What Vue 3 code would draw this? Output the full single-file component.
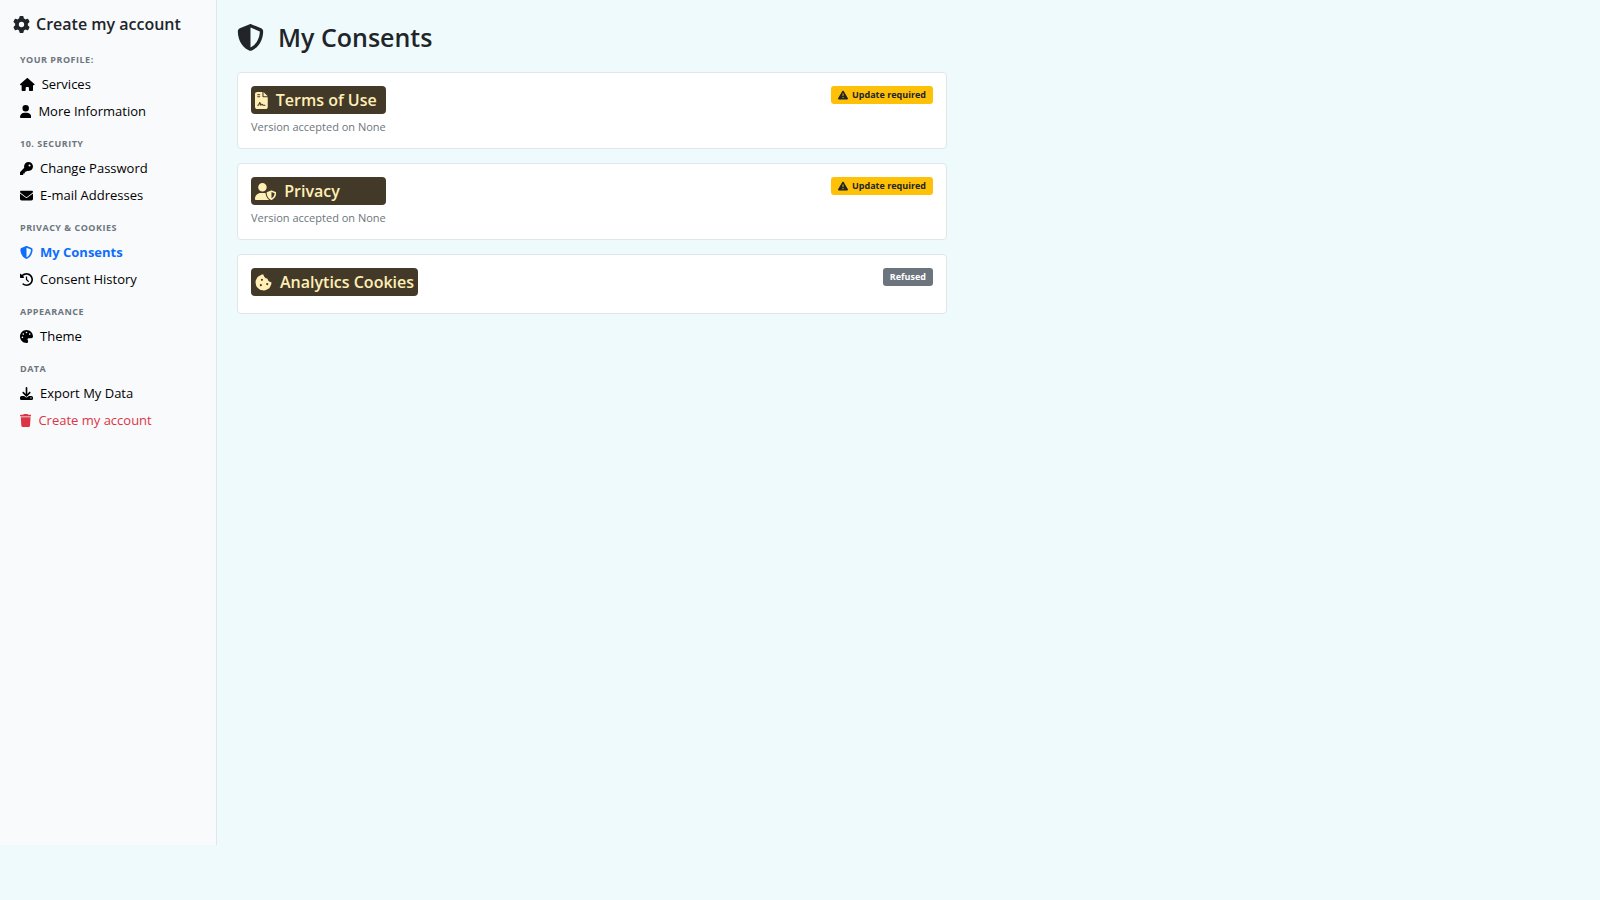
<script setup>
import { ref } from "vue";

const icons = {
  gear: { w: 512, d: "M495.9 166.6c3.2 8.7 .5 18.4-6.4 24.6l-43.3 39.4c1.1 8.3 1.7 16.8 1.7 25.4s-.6 17.1-1.7 25.4l43.3 39.4c6.9 6.2 9.6 15.9 6.4 24.6c-4.4 11.9-9.7 23.3-15.8 34.3l-4.7 8.1c-6.6 11-14 21.4-22.1 31.2c-5.9 7.2-15.7 9.6-24.5 6.8l-55.7-17.7c-13.4 10.3-28.2 18.9-44 25.4l-12.5 57.1c-2 9.1-9 16.3-18.2 17.8c-13.8 2.3-28 3.5-42.5 3.5s-28.7-1.2-42.5-3.5c-9.2-1.5-16.2-8.7-18.2-17.8l-12.5-57.1c-15.8-6.5-30.6-15.1-44-25.4L83.1 425.9c-8.8 2.8-18.6 .3-24.5-6.8c-8.1-9.8-15.5-20.2-22.1-31.2l-4.7-8.1c-6.1-11-11.4-22.4-15.8-34.3c-3.2-8.7-.5-18.4 6.4-24.6l43.3-39.4C64.6 273.1 64 264.6 64 256s.6-17.1 1.7-25.4L22.4 191.2c-6.9-6.2-9.6-15.9-6.4-24.6c4.4-11.9 9.7-23.3 15.8-34.3l4.7-8.1c6.6-11 14-21.4 22.1-31.2c5.9-7.2 15.7-9.6 24.5-6.8l55.7 17.7c13.4-10.3 28.2-18.9 44-25.4l12.5-57.1c2-9.1 9-16.3 18.2-17.8C227.3 1.2 241.5 0 256 0s28.7 1.2 42.5 3.5c9.2 1.5 16.2 8.7 18.2 17.8l12.5 57.1c15.8 6.5 30.6 15.1 44 25.4l55.7-17.7c8.8-2.8 18.6-.3 24.5 6.8c8.1 9.8 15.5 20.2 22.1 31.2l4.7 8.1c6.1 11 11.4 22.4 15.8 34.3zM256 336a80 80 0 1 0 0-160 80 80 0 1 0 0 160z" },
  house: { w: 576, d: "M575.8 255.5c0 18-15 32.1-32 32.1h-32l.7 160.2c0 2.7-.2 5.4-.5 8.1V472c0 22.1-17.9 40-40 40H456c-1.1 0-2.2 0-3.3-.1c-1.4 .1-2.8 .1-4.2 .1H416 392c-22.1 0-40-17.9-40-40V448 384c0-17.7-14.3-32-32-32H256c-17.7 0-32 14.3-32 32v64 24c0 22.1-17.9 40-40 40H160 128.1c-1.5 0-3-.1-4.5-.2c-1.2 .1-2.4 .2-3.6 .2H104c-22.1 0-40-17.9-40-40V360c0-.9 0-1.9 .1-2.8V287.6H32c-18 0-32-14-32-32.1c0-9 3-17 10-24L266.4 8c7-7 15-8 22-8s15 2 21 7L564.8 231.5c8 7 12 15 11 24z" },
  user: { w: 448, d: "M224 256A128 128 0 1 0 224 0a128 128 0 1 0 0 256zm-45.7 48C79.8 304 0 383.8 0 482.3C0 498.7 13.3 512 29.7 512H418.3c16.4 0 29.7-13.3 29.7-29.7C448 383.8 368.2 304 269.7 304H178.3z" },
  key: { w: 512, d: "M336 352c97.2 0 176-78.8 176-176S433.2 0 336 0S160 78.8 160 176c0 18.7 2.9 36.8 8.3 53.7L7 391c-4.5 4.5-7 10.6-7 17v80c0 13.3 10.7 24 24 24h80c13.3 0 24-10.7 24-24V448h40c13.3 0 24-10.7 24-24V384h40c6.4 0 12.5-2.5 17-7l33.3-33.3c16.9 5.4 35 8.3 53.7 8.3zM376 96a40 40 0 1 1 0 80 40 40 0 1 1 0-80z" },
  envelope: { w: 512, d: "M48 64C21.5 64 0 85.5 0 112c0 15.1 7.1 29.3 19.2 38.4L236.8 313.6c11.4 8.5 27 8.5 38.4 0L492.8 150.4c12.1-9.1 19.2-23.3 19.2-38.4c0-26.5-21.5-48-48-48H48zM0 176V384c0 35.3 28.7 64 64 64H448c35.3 0 64-28.7 64-64V176L294.4 339.2c-22.8 17.1-54 17.1-76.8 0L0 176z" },
  shield: { w: 512, d: "M256 0c4.6 0 9.2 1 13.4 2.9L457.7 82.8c22 9.3 38.4 31 38.3 57.2c-.5 99.2-41.3 280.7-213.6 363.2c-16.7 8-36.1 8-52.8 0C57.3 420.7 16.5 239.2 16 140c-.1-26.2 16.3-47.9 38.3-57.2L242.7 2.9C246.8 1 251.4 0 256 0zm0 66.8V444.8C394 378 431.1 230.1 432 141.4L256 66.8l0 0z" },
  history: { w: 512, d: "M75 75L41 41C25.9 25.9 0 36.6 0 57.9V168c0 13.3 10.7 24 24 24H134.1c21.4 0 32.1-25.9 17-41l-30.8-30.8C155 85.5 203 64 256 64c106 0 192 86 192 192s-86 192-192 192c-40.8 0-78.6-12.7-109.7-34.4c-14.5-10.1-34.4-6.6-44.6 7.9s-6.6 34.4 7.9 44.6C151.2 495 201.7 512 256 512c141.4 0 256-114.6 256-256S397.4 0 256 0C185.3 0 121.3 28.7 75 75zm181 53c-13.3 0-24 10.7-24 24V256c0 6.4 2.5 12.5 7 17l72 72c9.4 9.4 24.6 9.4 33.9 0s9.4-24.6 0-33.9l-65-65V152c0-13.3-10.7-24-24-24z" },
  palette: { w: 512, d: "M512 256c0 .9 0 1.8 0 2.7c-.4 36.5-33.6 61.3-70.1 61.3H344c-26.5 0-48 21.5-48 48c0 3.4 .4 6.7 1 9.9c2.1 10.2 6.5 20 10.8 29.9c6.1 13.8 12.1 27.5 12.1 42c0 31.8-21.6 60.7-53.4 62c-3.5 .1-7 .2-10.6 .2C114.6 512 0 397.4 0 256S114.6 0 256 0S512 114.6 512 256zM128 288a32 32 0 1 0 -64 0 32 32 0 1 0 64 0zm0-96a32 32 0 1 0 0-64 32 32 0 1 0 0 64zM288 96a32 32 0 1 0 -64 0 32 32 0 1 0 64 0zm96 96a32 32 0 1 0 0-64 32 32 0 1 0 0 64z" },
  download: { w: 512, d: "M288 32c0-17.7-14.3-32-32-32s-32 14.3-32 32V274.7l-73.4-73.4c-12.5-12.5-32.8-12.5-45.3 0s-12.5 32.8 0 45.3l128 128c12.5 12.5 32.8 12.5 45.3 0l128-128c12.5-12.5 12.5-32.8 0-45.3s-32.8-12.5-45.3 0L288 274.7V32zM64 352c-35.3 0-64 28.7-64 64v32c0 35.3 28.7 64 64 64H448c35.3 0 64-28.7 64-64V416c0-35.3-28.7-64-64-64H346.5l-45.3 45.3c-25 25-65.5 25-90.5 0L165.5 352H64zm368 56a24 24 0 1 1 0 48 24 24 0 1 1 0-48z" },
  trash: { w: 448, d: "M135.2 17.7L128 32H32C14.3 32 0 46.3 0 64S14.3 96 32 96H416c17.7 0 32-14.3 32-32s-14.3-32-32-32H320l-7.2-14.3C307.4 6.8 296.3 0 284.2 0H163.8c-12.1 0-23.2 6.8-28.6 17.7zM416 128H32L53.2 467c1.6 25.3 22.6 45 47.9 45H346.9c25.3 0 46.3-19.7 47.9-45L416 128z" },
  contract: { w: 384, d: "M64 0C28.7 0 0 28.7 0 64V448c0 35.3 28.7 64 64 64H320c35.3 0 64-28.7 64-64V160H256c-17.7 0-32-14.3-32-32V0H64zM256 0V128H384L256 0zM80 64h64c8.8 0 16 7.2 16 16s-7.2 16-16 16H80c-8.8 0-16-7.2-16-16s7.2-16 16-16zm0 64h64c8.8 0 16 7.2 16 16s-7.2 16-16 16H80c-8.8 0-16-7.2-16-16s7.2-16 16-16zm54.2 253.8c-6.1 20.3-24.8 34.2-46 34.2H80c-8.8 0-16-7.2-16-16s7.2-16 16-16h8.2c7.1 0 13.3-4.6 15.3-11.4l14.9-49.5c3.4-11.3 13.8-19.1 25.6-19.1s22.2 7.7 25.6 19.1l11.6 38.6c7.4-6.2 16.8-9.7 26.8-9.7c15.9 0 30.4 9 37.5 23.2l4.4 8.8H304c8.8 0 16 7.2 16 16s-7.2 16-16 16H240c-6.1 0-11.6-3.4-14.3-8.8l-8.8-17.7c-1.7-3.4-5.1-5.5-8.8-5.5s-7.2 2.1-8.8 5.5l-8.8 17.7c-2.9 5.9-9.2 9.4-15.7 8.8s-12.1-5.1-13.9-11.3L144 349l-9.8 32.8z" },
  userShield: { w: 640, d: "M224 256A128 128 0 1 0 224 0a128 128 0 1 0 0 256zm-45.7 48C79.8 304 0 383.8 0 482.3C0 498.7 13.3 512 29.7 512H418.3c1.8 0 3.5-.2 5.3-.5c-76.3-55.1-99.8-141-103.1-200.2c-16.1-4.8-33.1-7.3-50.7-7.3H178.3zm308.8-78.3l-120 48C358 277.4 352 286.2 352 296c0 63.3 25.9 168.8 134.8 214.2c5.9 2.5 12.6 2.5 18.5 0C614.1 464.8 640 359.3 640 296c0-9.8-6-18.6-15.1-22.3l-120-48c-5.7-2.3-12.1-2.3-17.8 0zM591.4 312c-3.9 50.7-27.2 116.7-95.4 149.7V273.8L591.4 312z" },
  cookie: { w: 512, d: "M257.5 27.6c-.8-5.4-4.9-9.8-10.3-10.6c-22.1-3.1-44.6 .9-64.4 11.4l-74 39.5C89.1 78.4 73.2 94.9 63.4 115L26.7 190.6c-9.8 20.1-13 42.9-9.1 64.9l14.5 82.8c3.9 22.1 14.6 42.3 30.7 57.9l60.3 58.4c16.1 15.6 36.6 25.6 58.7 28.7l83 11.7c22.1 3.1 44.6-.9 64.4-11.4l74-39.5c19.7-10.5 35.6-27 45.4-47.2l36.7-75.5c9.8-20.1 13-42.9 9.1-64.9c-.9-5.3-5.3-9.3-10.6-10.1c-51.5-8.2-92.8-47.1-104.5-97.4c-1.8-7.6-8-13.4-15.7-14.6c-54.6-8.7-97.7-52-106.2-106.8zM208 144a32 32 0 1 1 0 64 32 32 0 1 1 0-64zM144 336a32 32 0 1 1 64 0 32 32 0 1 1 -64 0zm224-64a32 32 0 1 1 0 64 32 32 0 1 1 0-64z" },
  warning: { w: 512, d: "M256 32c14.2 0 27.3 7.5 34.5 19.8l216 368c7.3 12.4 7.3 27.7 .2 40.1S486.3 480 472 480H40c-14.3 0-27.6-7.7-34.7-20.1s-7-27.8 .2-40.1l216-368C228.7 39.5 241.8 32 256 32zm0 128c-13.3 0-24 10.7-24 24V296c0 13.3 10.7 24 24 24s24-10.7 24-24V184c0-13.3-10.7-24-24-24zm32 224a32 32 0 1 0 -64 0 32 32 0 1 0 64 0z" },
};
const box = (name) => `0 0 ${icons[name].w} 512`;

const active = ref("My Consents");
const sections = [
  {
    title: "Your profile:",
    links: [
      { text: "Services", icon: "house" },
      { text: "More Information", icon: "user" },
    ],
  },
  {
    title: "10. Security",
    links: [
      { text: "Change Password", icon: "key" },
      { text: "E-mail Addresses", icon: "envelope" },
    ],
  },
  {
    title: "Privacy & Cookies",
    links: [
      { text: "My Consents", icon: "shield" },
      { text: "Consent History", icon: "history" },
    ],
  },
  {
    title: "Appearance",
    links: [{ text: "Theme", icon: "palette" }],
  },
  {
    title: "Data",
    links: [
      { text: "Export My Data", icon: "download" },
      { text: "Create my account", icon: "trash", danger: true },
    ],
  },
];

const consents = [
  { title: "Terms of Use", icon: "contract", note: "Version accepted on None", update: true },
  { title: "Privacy", icon: "userShield", note: "Version accepted on None", update: true },
  { title: "Analytics Cookies", icon: "cookie", update: false },
];
</script>
<template>
  <div class="page">
    <aside class="sidebar">
      <h2 class="side-title">
        <svg class="icon" :viewBox="box('gear')"><path :d="icons.gear.d" /></svg>
        Create my account
      </h2>
      <nav>
        <div v-for="section in sections" :key="section.title">
          <h3 class="side-heading">{{ section.title }}</h3>
          <a v-for="link in section.links" :key="link.text" href="#" class="side-link"
            :class="{ active: link.text === active, danger: link.danger }" @click.prevent="active = link.text">
            <svg class="icon" :viewBox="box(link.icon)"><path :d="icons[link.icon].d" /></svg>
            {{ link.text }}
          </a>
        </div>
      </nav>
    </aside>
    <main class="content">
      <h1 class="title">
        <svg class="icon" :viewBox="box('shield')"><path :d="icons.shield.d" /></svg>
        My Consents
      </h1>
      <section class="card" v-for="consent in consents" :key="consent.title">
        <div>
          <h2 class="card-title">
            <svg class="icon" :viewBox="box(consent.icon)"><path :d="icons[consent.icon].d" /></svg>
            {{ consent.title }}
          </h2>
          <p class="note" v-if="consent.note">{{ consent.note }}</p>
        </div>
        <span class="badge update" v-if="consent.update">
          <svg class="icon" :viewBox="box('warning')"><path :d="icons.warning.d" /></svg>
          Update required
        </span>
        <span class="badge refused" v-else>Refused</span>
      </section>
    </main>
  </div>
</template>
<style>
body {
  background-color: #eefafc;
}
</style>
<style scoped>
.page {
  display: flex;
  align-items: flex-start;
  font-family: "Open Sans", "Noto Sans", sans-serif;
  color: #212529;
}

h1,
h2,
h3,
p {
  margin: 0;
}

.icon {
  height: 1em;
  flex-shrink: 0;
  fill: currentColor;
}

.sidebar {
  box-sizing: border-box;
  width: 217px;
  height: calc(100vh - 55px);
  flex-shrink: 0;
  padding: 12px 13px;
  background-color: #f9fafc;
  border-right: 1px solid #dee8ec;
}

.side-title {
  display: flex;
  align-items: center;
  gap: 6px;
  font-size: 16px;
  line-height: 24px;
  font-weight: 600;
}

.side-title .icon {
  height: 17px;
}

.side-heading {
  padding: 11px 7px 3px;
  font-size: 9px;
  line-height: 16px;
  font-weight: 700;
  letter-spacing: 0.5px;
  text-transform: uppercase;
  color: #6c757d;
}

nav {
  padding-top: 5px;
}

.side-link {
  display: flex;
  align-items: center;
  gap: 7px;
  padding: 0 7px;
  font-size: 13px;
  line-height: 27px;
  color: #000;
  text-decoration: none;
}

.side-link.active {
  font-weight: 700;
  color: #0d6efd;
}

.side-link.danger {
  color: #dc3545;
}

.content {
  flex: 1;
  max-width: 710px;
  padding: 20px;
}

.title {
  display: flex;
  align-items: center;
  gap: 14px;
  margin-bottom: 18px;
  font-size: 25px;
  line-height: 34px;
  font-weight: 600;
}

.title .icon {
  height: 27px;
}

.card {
  display: flex;
  justify-content: space-between;
  align-items: flex-start;
  margin-bottom: 14px;
  padding: 13px;
  background-color: #fff;
  border: 1px solid #dfe6ea;
  border-radius: 4px;
}

.card-title {
  display: flex;
  align-items: center;
  gap: 8px;
  margin-bottom: 4px;
  padding: 0 4px;
  font-size: 16px;
  line-height: 28px;
  font-weight: 600;
  color: #ffefb5;
  background-color: #433929;
  border-radius: 4px;
}

.card-title .icon {
  height: 17px;
}

.note {
  font-size: 11px;
  line-height: 17px;
  color: #6c757d;
}

.badge {
  display: flex;
  align-items: center;
  gap: 4px;
  padding: 0 7px;
  font-size: 9px;
  line-height: 18px;
  font-weight: 700;
  border-radius: 3px;
}

.badge .icon {
  height: 10px;
}

.update {
  color: #212529;
  background-color: #ffc107;
}

.refused {
  color: #fff;
  background-color: #6c757d;
}
</style>
